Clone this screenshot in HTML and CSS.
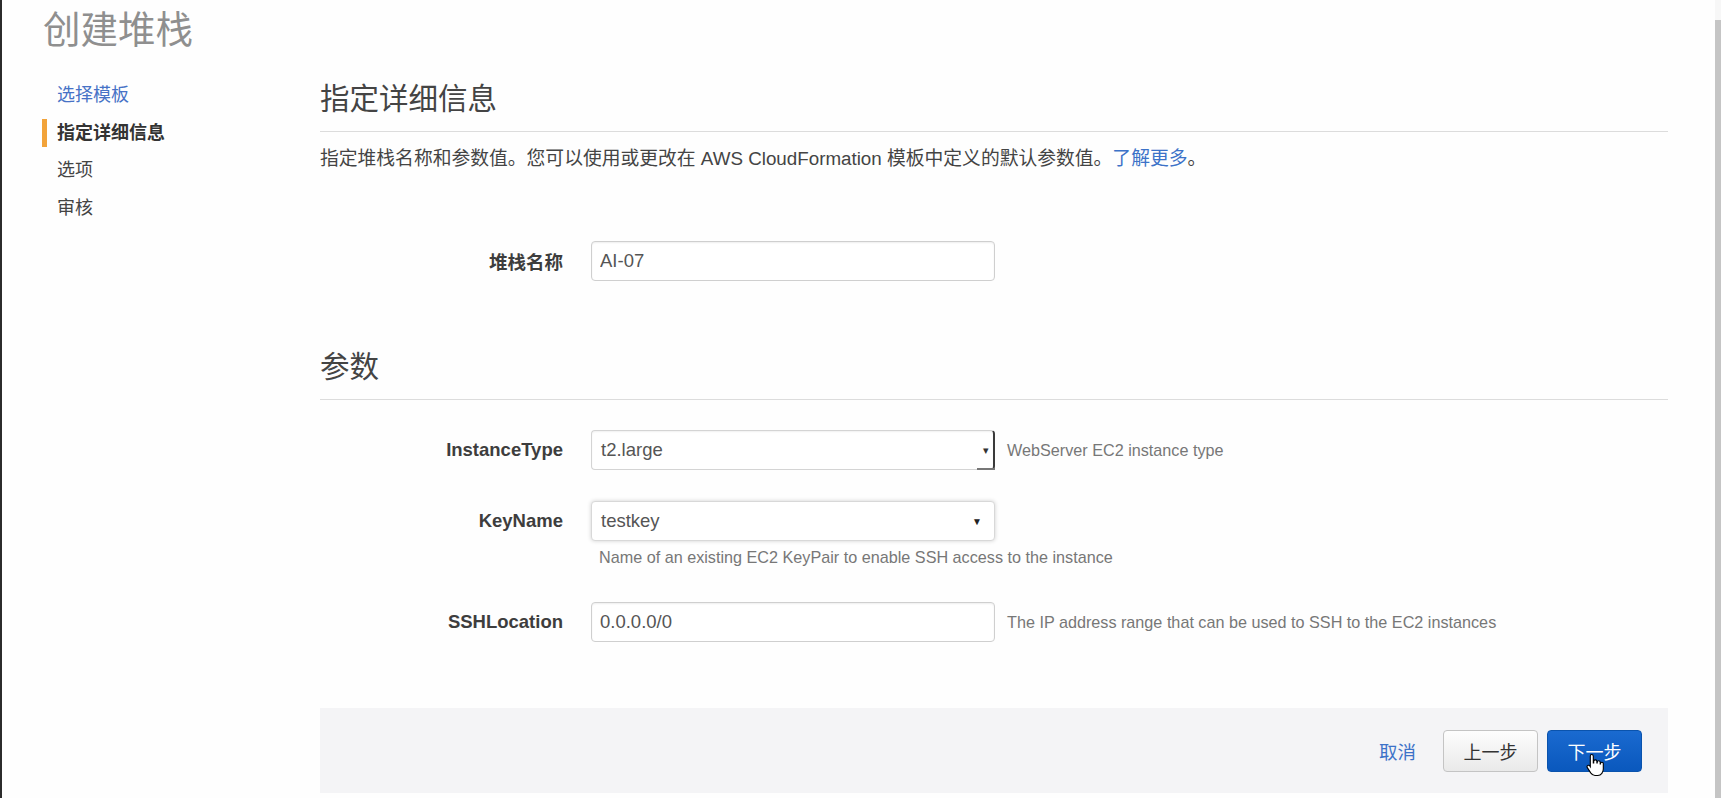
FILE: index.html
```html
<!DOCTYPE html>
<html lang="zh-CN">
<head>
<meta charset="utf-8">
<title>创建堆栈</title>
<link rel="stylesheet" href="styles.css">
</head>
<body>
<div class="window">
  <div class="page">
    <h1 class="page-title">创建堆栈</h1>
    <div class="layout">
      <nav class="steps">
        <a class="step step-link">选择模板</a>
        <div class="step step-active">指定详细信息</div>
        <div class="step">选项</div>
        <div class="step">审核</div>
      </nav>
      <main class="main">
        <h2 class="section-title">指定详细信息</h2>
        <p class="desc">指定堆栈名称和参数值。您可以使用或更改在 AWS CloudFormation 模板中定义的默认参数值。<a class="link">了解更多</a>。</p>

        <div class="field field-stack">
          <label class="field-label">堆栈名称</label>
          <input class="text-input" type="text" value="AI-07" readonly>
        </div>

        <h2 class="section-title section-params">参数</h2>

        <div class="field field-type">
          <label class="field-label">InstanceType</label>
          <div class="select select-native">
            <span class="select-value">t2.large</span>
            <span class="select-arrow-small">▾</span>
          </div>
          <span class="field-help">WebServer EC2 instance type</span>
        </div>

        <div class="field field-key">
          <label class="field-label">KeyName</label>
          <div class="select select-focus">
            <span class="select-value">testkey</span>
            <span class="select-arrow">▼</span>
          </div>
        </div>
        <div class="help-below">Name of an existing EC2 KeyPair to enable SSH access to the instance</div>

        <div class="field field-ssh">
          <label class="field-label">SSHLocation</label>
          <input class="text-input" type="text" value="0.0.0.0/0" readonly>
          <span class="field-help">The IP address range that can be used to SSH to the EC2 instances</span>
        </div>

        <div class="footer">
          <a class="link cancel">取消</a>
          <button class="btn btn-default">上一步</button>
          <button class="btn btn-primary">下一步<svg class="cursor" width="18" height="24" viewBox="0 0 18 24"><path d="M5.5 1.5c1 0 1.8.8 1.8 1.8V10h.4V8.5c0-1 .8-1.6 1.6-1.6s1.6.7 1.6 1.6V10h.3V9.3c0-.9.7-1.5 1.5-1.5s1.5.7 1.5 1.5V11h.3v-.4c0-.8.7-1.4 1.4-1.4s1.4.6 1.4 1.4V16c0 3-2 6.5-5.5 6.5H9c-2 0-3.2-1-4.3-2.6L1.3 14.6c-.5-.8-.3-1.7.4-2.1.7-.5 1.6-.3 2.1.4l.5.8V3.3c0-1 .5-1.8 1.2-1.8z" fill="#fff" stroke="#000" stroke-width="1.1"/></svg></button>
        </div>
      </main>
    </div>
  </div>
  <div class="scroll-gutter"><div class="scroll-thumb"></div></div>
</div>
</body>
</html>
```
FILE: styles.css
```css
* { box-sizing: border-box; }
html, body { margin: 0; padding: 0; background: #fff; }
body {
  font-family: "Liberation Sans", "Noto Sans CJK SC", sans-serif;
  color: #444;
}
.window {
  display: flex;
  height: 798px;
  overflow: hidden;
  border-left: 2px solid #2b2b2b;
  background: #fefefe;
}
.page { flex: 1; min-width: 0; }
.page-title {
  margin: 0 0 0 41px;
  height: 60px;
  line-height: 60px;
  font-size: 37.5px;
  font-weight: 400;
  color: #8f8f8f;
}
.layout {
  display: grid;
  grid-template-columns: 318px 1348px;
}
.steps {
  display: flex;
  flex-direction: column;
  gap: 9.5px;
  padding-top: 21px;
}
.step {
  margin-left: 40px;
  padding-left: 10px;
  border-left: 5px solid transparent;
  height: 28px;
  line-height: 28px;
  font-size: 18px;
  color: #444;
}
.step-link { color: #4772c6; }
.step-active { border-left-color: #f2a33a; font-weight: 700; color: #333; }

.main { display: flex; flex-direction: column; }
.section-title {
  margin: 19px 0 0;
  height: 53px;
  line-height: 40px;
  padding-bottom: 12px;
  border-bottom: 1px solid #dcdcdc;
  font-size: 29.5px;
  font-weight: 400;
  color: #444;
}
.section-params { margin-top: 66px; }
.desc {
  margin: 13px 0 0;
  line-height: 28px;
  font-size: 18.8px;
  color: #444;
}
.link { color: #3c72c8; text-decoration: none; }

.field { display: flex; align-items: center; }
.field-label {
  width: 243px;
  margin-right: 28px;
  text-align: right;
  font-size: 18.5px;
  font-weight: 700;
  color: #3d3d3d;
}
.field-stack { margin-top: 68px; }
.field-type { margin-top: 30px; }
.field-key { margin-top: 31px; }
.field-ssh { margin-top: 35px; }

.text-input {
  width: 404px;
  height: 40px;
  padding: 0 8px;
  border: 1px solid #cfcfcf;
  border-radius: 4px;
  box-shadow: inset 0 1px 2px rgba(0,0,0,0.07);
  font-family: "Liberation Sans", "Noto Sans CJK SC", sans-serif;
  font-size: 18.5px;
  color: #555;
  background: #fff;
  outline: none;
}
.select {
  position: relative;
  width: 404px;
  height: 40px;
  display: flex;
  align-items: center;
  justify-content: space-between;
  padding: 0 10px 0 9px;
  border-radius: 4px;
  background: #fff;
  font-size: 18.5px;
  color: #555;
}
.select-native {
  border: 1px solid #d4d4d4;
  border-right: 2px solid #3a3a3a;
  box-shadow: inset 0 1px 2px rgba(0,0,0,0.06);
  padding-right: 4px;
}
.select-native::after {
  content: "";
  position: absolute;
  right: -2px;
  bottom: -1px;
  width: 18px;
  height: 2px;
  background: #777;
}
.select-arrow-small { font-size: 11px; color: #333; }
.select-focus {
  border: 1px solid #d8d8d8;
  box-shadow: 0 0 4px rgba(0,0,0,0.18);
}
.select-arrow { font-size: 10px; color: #222; margin-right: 2px; }

.field-help {
  margin-left: 12px;
  font-size: 16.2px;
  color: #777;
}
.help-below {
  margin: 6px 0 0 279px;
  line-height: 20px;
  font-size: 16.2px;
  color: #777;
}

.footer {
  margin-top: 66px;
  height: 85px;
  display: flex;
  align-items: center;
  justify-content: flex-end;
  padding-right: 26px;
  background: #f4f4f6;
}
.cancel { font-size: 18.5px; margin-right: 27px; }
.btn {
  height: 42px;
  width: 95px;
  border-radius: 4px;
  font-family: "Liberation Sans", "Noto Sans CJK SC", sans-serif;
  font-size: 18px;
  cursor: pointer;
}
.btn-default {
  margin-right: 9px;
  border: 1px solid #c4c4c4;
  background: linear-gradient(#fdfdfd, #e9e9e9);
  color: #333;
}
.btn-primary {
  position: relative;
  border: 1px solid #0a53ad;
  background: linear-gradient(#1a6ad0, #0a58bd);
  color: #fff;
}
.cursor {
  position: absolute;
  left: 38px;
  top: 22px;
}

.scroll-gutter {
  width: 6px;
  padding-top: 20px;
  background: #f7f7f7;
}
.scroll-thumb {
  height: 100%;
  background: #c5c5c5;
}
```
